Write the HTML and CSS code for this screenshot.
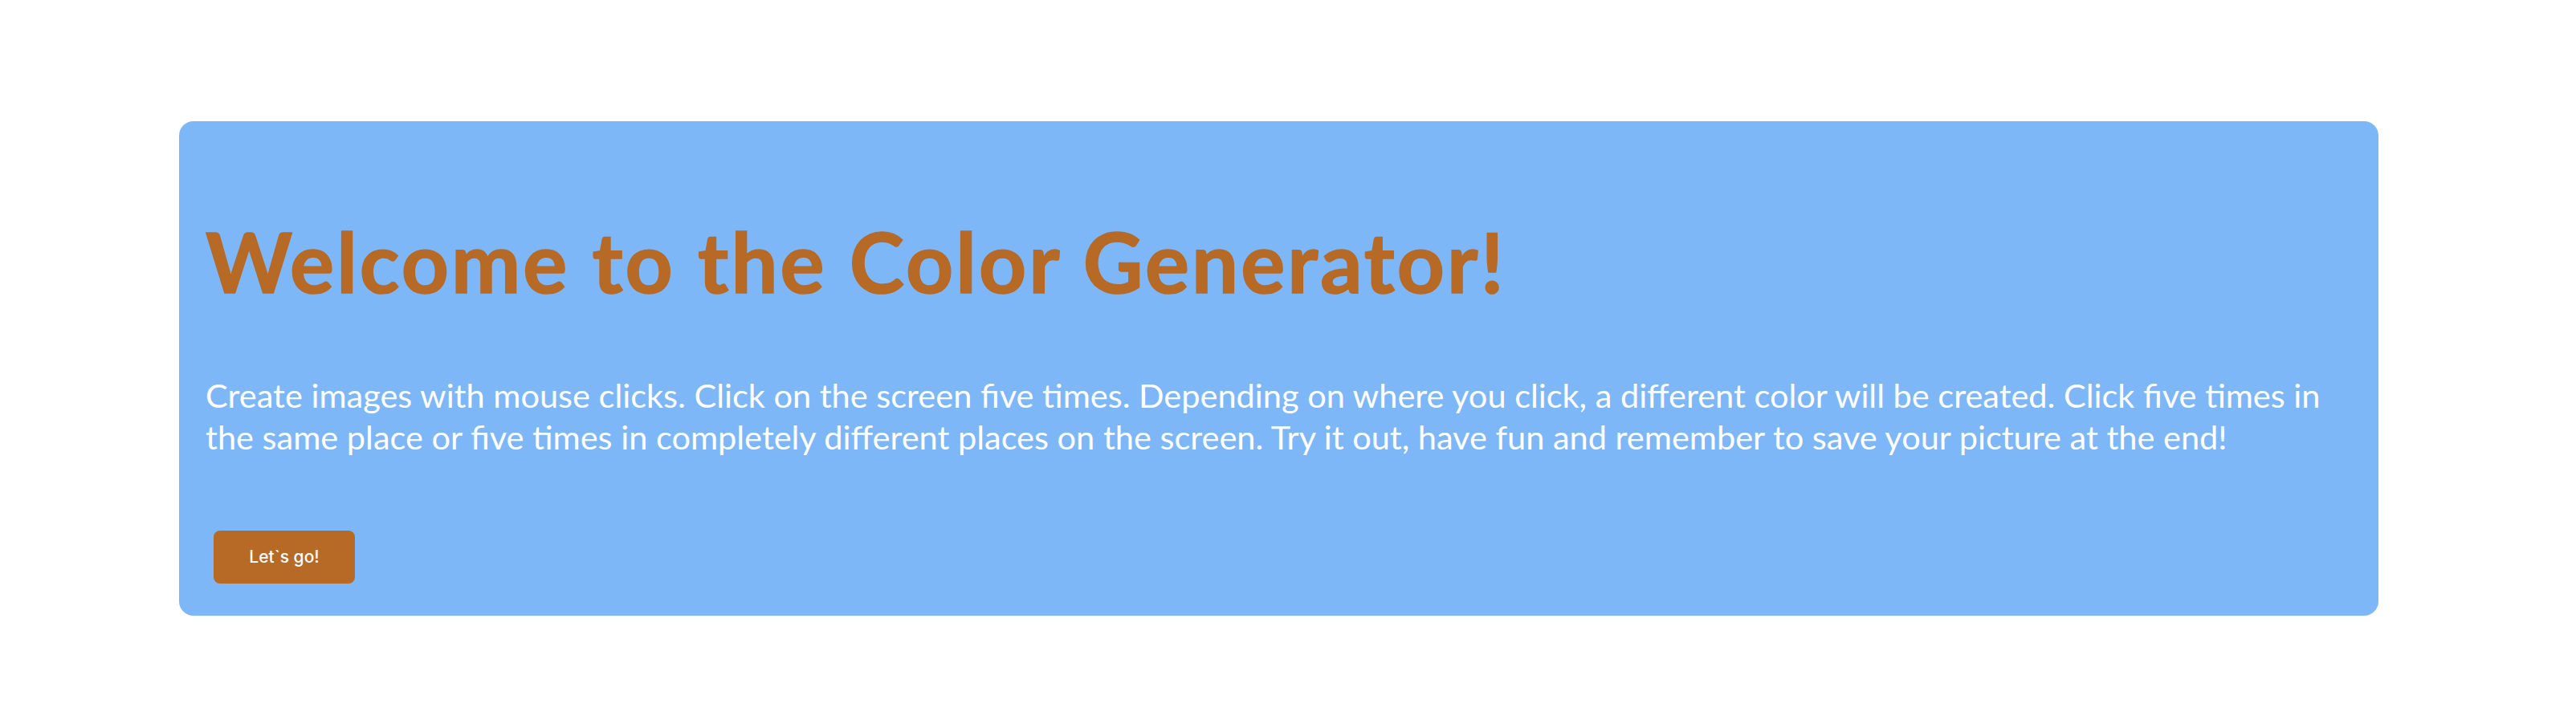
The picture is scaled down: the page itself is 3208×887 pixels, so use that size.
FILE: index.html
```html
<!DOCTYPE html>
<html lang="en">
<head>
<meta charset="utf-8">
<title>Color Generator</title>
<link rel="stylesheet" href="styles.css">
</head>
<body>
<main class="page">
  <section class="card">
    <h1 class="title">Welcome to the Color Generator!</h1>
    <p class="intro">Create images with mouse clicks. Click on the screen five times. Depending on where you click, a different color will be created. Click five times in the same place or five times in completely different places on the screen. Try it out, have fun and remember to save your picture at the end!</p>
    <button class="go">Let`s go!</button>
  </section>
</main>
</body>
</html>
```

FILE: styles.css
```css
html, body {
  margin: 0;
  padding: 0;
  background: #ffffff;
}

.page {
  padding: 151px 246px 0 223px;
}

.card {
  background: #7eb7f7;
  border-radius: 18px;
  padding: 113px 32px 40px 33px;
  display: flex;
  flex-direction: column;
  align-items: flex-start;
}

.title {
  margin: 0;
  font-family: Lato, "Open Sans", sans-serif;
  font-weight: 700;
  font-size: 103px;
  line-height: 1.2;
  letter-spacing: 3.1px;
  -webkit-text-stroke: 1.6px #b66a26;
  color: #b66a26;
}

.intro {
  margin: 78px 0 0 0;
  font-family: Lato, "Open Sans", sans-serif;
  font-size: 41.5px;
  line-height: 52px;
  color: #ffffff;
}

.go {
  margin: 91px 0 0 10px;
  width: 176px;
  height: 66px;
  border: none;
  border-radius: 8px;
  background: #b66a26;
  color: #ffffff;
  font-family: Inter, "Liberation Sans", sans-serif;
  font-size: 21px;
  font-weight: 500;
  padding: 0;
}
```
